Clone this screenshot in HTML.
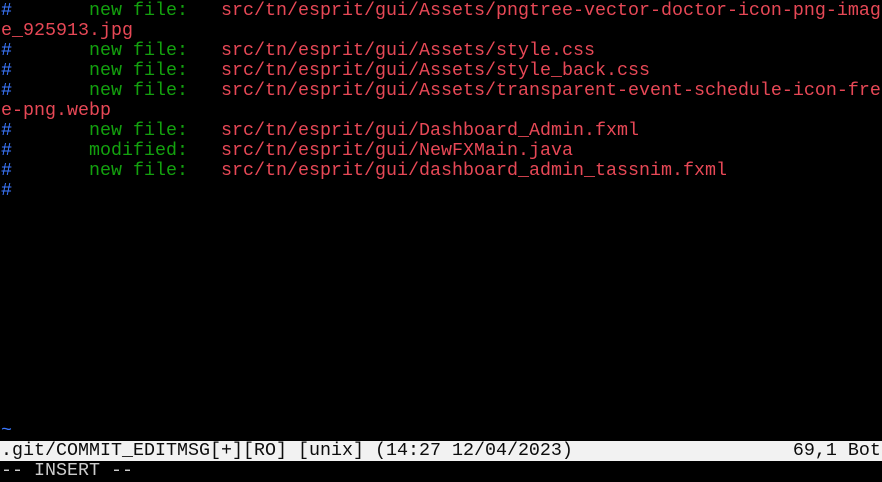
<!DOCTYPE html>
<html><head><style>
html,body{margin:0;padding:0;background:#000;width:882px;height:482px;overflow:hidden}
pre{margin:0;padding:1px 0 0 1px;font-family:"Liberation Mono",monospace;font-size:18.33px;line-height:20px;color:#cccccc;white-space:pre}
.b{color:#3b78ff}.g{color:#13a10e}.r{color:#e74856}
.s{background:#f2f2f2;color:#0c0c0c;display:inline-block;width:882px;margin-left:-1px;padding-left:1px}
</style></head><body><pre><span class="b">#</span>       <span class="g">new file:</span>   <span class="r">src/tn/esprit/gui/Assets/pngtree-vector-doctor-icon-png-imag</span>
<span class="r">e_925913.jpg</span>
<span class="b">#</span>       <span class="g">new file:</span>   <span class="r">src/tn/esprit/gui/Assets/style.css</span>
<span class="b">#</span>       <span class="g">new file:</span>   <span class="r">src/tn/esprit/gui/Assets/style_back.css</span>
<span class="b">#</span>       <span class="g">new file:</span>   <span class="r">src/tn/esprit/gui/Assets/transparent-event-schedule-icon-fre</span>
<span class="r">e-png.webp</span>
<span class="b">#</span>       <span class="g">new file:</span>   <span class="r">src/tn/esprit/gui/Dashboard_Admin.fxml</span>
<span class="b">#</span>       <span class="g">modified:</span>   <span class="r">src/tn/esprit/gui/NewFXMain.java</span>
<span class="b">#</span>       <span class="g">new file:</span>   <span class="r">src/tn/esprit/gui/dashboard_admin_tassnim.fxml</span>
<span class="b">#</span>











<span class="b">~</span>
<span class="s">.git/COMMIT_EDITMSG[+][RO] [unix] (14:27 12/04/2023)                    69,1 Bot</span>
-- INSERT --</pre></body></html>
